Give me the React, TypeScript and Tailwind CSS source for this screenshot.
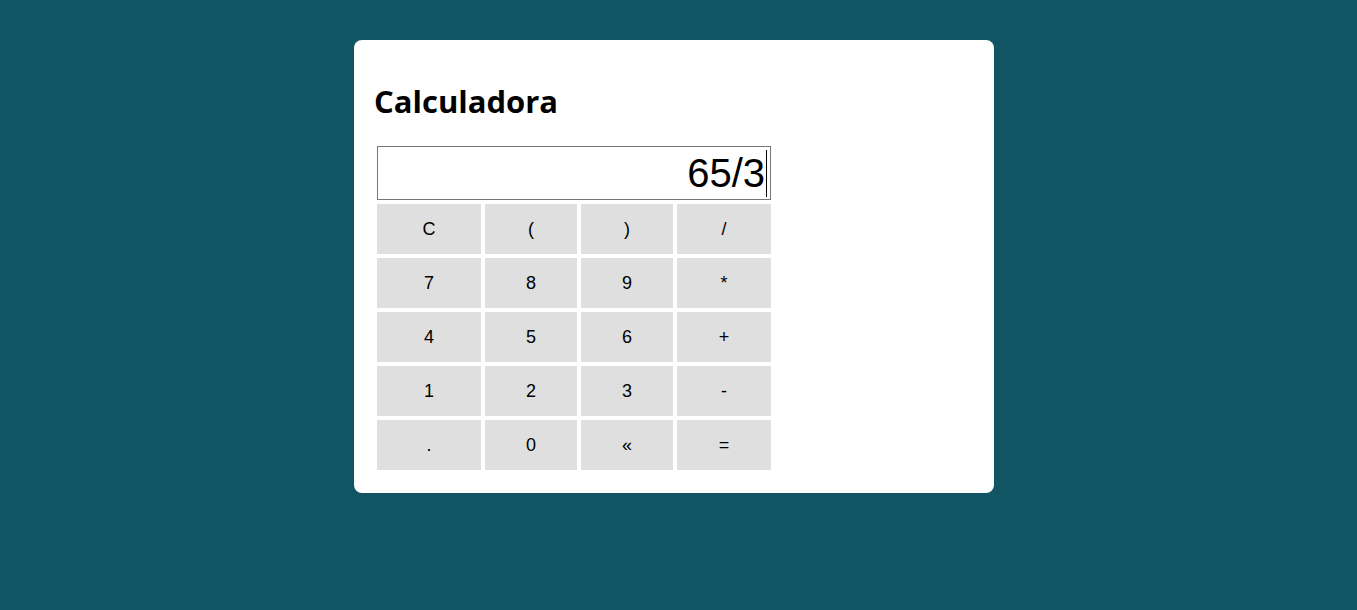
const keys = [
  ['C', '(', ')', '/'],
  ['7', '8', '9', '*'],
  ['4', '5', '6', '+'],
  ['1', '2', '3', '-'],
  ['.', '0', '«', '='],
];

export default function App() {
  return (
    <div className="min-h-screen w-full bg-[#115565] pt-10">
      <div className="ml-[354px] w-[640px] h-[453px] bg-white rounded-lg px-5 pt-[39px]">
        <h1 className="text-[31px] leading-[44px] font-bold text-black font-['Open_Sans',sans-serif]">
          Calculadora
        </h1>

        <div className="mt-[23px] ml-[3px] w-[394px]">
          {/* display */}
          <div className="h-[54px] border border-[#767676] flex items-center justify-end pr-[3px] font-['Liberation_Sans',Arial,sans-serif] text-[40px] text-black">
            <span className="leading-none">65/3</span>
            <span className="w-px h-[47px] bg-black ml-px" />
          </div>

          {/* keypad */}
          <div className="mt-1 grid grid-cols-[104px_92px_92px_94px] auto-rows-[50px] gap-1">
            {keys.flat().map((k, i) => (
              <button
                key={i}
                className="bg-[#dfdfdf] text-black text-lg font-['Liberation_Sans',Arial,sans-serif] flex items-center justify-center"
              >
                {k}
              </button>
            ))}
          </div>
        </div>
      </div>
    </div>
  );
}
